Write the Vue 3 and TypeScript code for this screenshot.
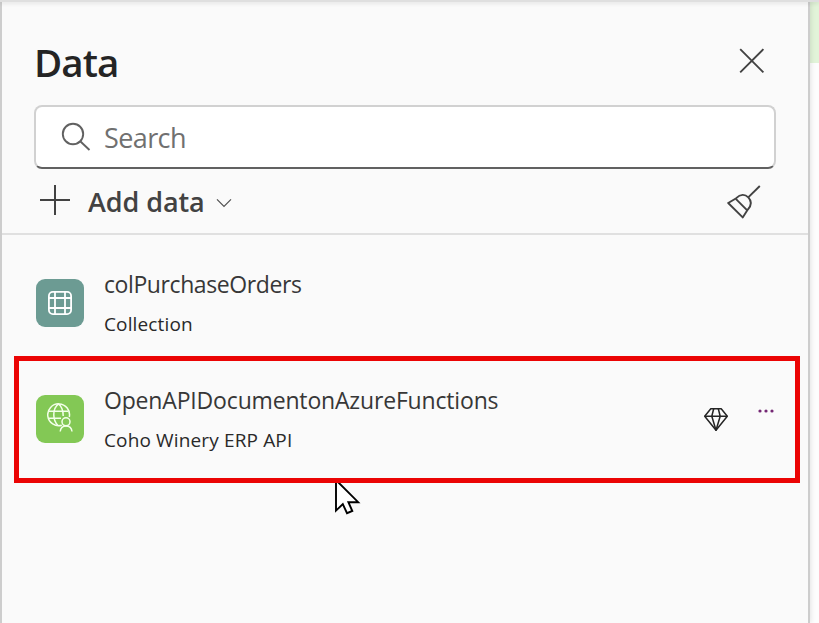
<script setup lang="ts">
interface Source {
  name: string
  detail: string
  kind: 'collection' | 'connector'
  premium: boolean
}

const sources: Source[] = [
  { name: 'colPurchaseOrders', detail: 'Collection', kind: 'collection', premium: false },
  { name: 'OpenAPIDocumentonAzureFunctions', detail: 'Coho Winery ERP API', kind: 'connector', premium: true },
]
</script>

<template>
  <div class="page">
    <section class="panel">
      <header class="head">
        <h1 class="title">Data</h1>
        <svg class="close" viewBox="0 0 26 26" width="26" height="26">
          <path d="M1.2 1.2 24.4 24.4M24.4 1.2 1.2 24.4" fill="none" stroke="#424242" stroke-width="1.9" />
        </svg>
      </header>

      <div class="search">
        <svg width="32" height="32" viewBox="0 0 32 32">
          <g fill="none" stroke="#616161" stroke-width="1.9">
            <circle cx="13" cy="13" r="10.2" />
            <path d="M20.5 20.5 29.5 29" />
          </g>
        </svg>
        <span class="placeholder">Search</span>
      </div>

      <div class="toolbar">
        <svg width="30" height="30" viewBox="0 0 30 30">
          <path d="M15 0V30M0 15H30" fill="none" stroke="#424242" stroke-width="2" />
        </svg>
        <span class="add">Add data</span>
        <svg class="chevron" width="16" height="10" viewBox="0 0 16 10">
          <path d="M1 1.3 8 8.3 15 1.3" fill="none" stroke="#505050" stroke-width="1.2" />
        </svg>
        <svg class="broom" width="34" height="34" viewBox="0 0 34 34">
          <g fill="none" stroke="#424242" stroke-width="1.9" stroke-linejoin="round">
            <path d="M32.8 1 21.5 12.2" />
            <path d="M1.2 18 9.2 13.2C13.5 8.8 18 9 21.3 12.3C24.8 16 24.8 20 20.8 24.6L15.7 32.4Z" />
            <path d="M8.8 13.8 20 25.2" />
          </g>
        </svg>
      </div>

      <ul class="list">
        <li v-for="source in sources" :key="source.name" class="row">
          <span class="tile" :class="source.kind">
            <svg v-if="source.kind === 'collection'" width="24" height="24" viewBox="0 0 24 24">
              <g fill="none" stroke="#fff" stroke-width="1.8">
                <rect x="0.9" y="0.9" width="22.2" height="22.2" rx="4" />
                <path d="M7 1V23M17 1V23M1 7H23M1 17H23" />
              </g>
            </svg>
            <svg v-else class="globe" width="26" height="29" viewBox="0 0 26 29">
              <g fill="none" stroke="#f3ffe9" stroke-width="1.5">
                <path d="M14.8 22.2A10.9 10.9 0 1 1 22.3 14" />
                <path d="M11 22.6C7.6 19 6.8 15.5 6.8 11.7S8 3.6 11.5 .9C15 3.6 16.2 8 16.2 13" />
                <path d="M2 8.2H21M2 15.2H14" />
                <circle cx="19" cy="18.8" r="4" />
                <path d="M13.2 28.5C13.6 24.8 16 22.9 19 22.9S24.6 24.8 25 28.5" />
              </g>
            </svg>
          </span>
          <div class="text">
            <span class="name" :class="source.kind">{{ source.name }}</span>
            <span class="detail">{{ source.detail }}</span>
          </div>
          <div v-if="source.premium" class="actions">
            <svg class="gem" width="26" height="26" viewBox="0 0 26 26">
              <g fill="none" stroke="#242424" stroke-width="1.5" stroke-linejoin="round">
                <path d="M7.8 1.7H18.2L24.3 9.3 13 23.2 1.7 9.3Z" />
                <path d="M1.7 9.3H24.3M10.7 1.7 8.8 9.3 13 23.2 17.2 9.3 15.3 1.7" />
              </g>
            </svg>
            <svg class="more" width="16" height="4" viewBox="0 0 16 4">
              <g fill="#742774">
                <circle cx="2" cy="2" r="1.6" />
                <circle cx="8" cy="2" r="1.6" />
                <circle cx="14" cy="2" r="1.6" />
              </g>
            </svg>
          </div>
        </li>
      </ul>
    </section>
    <aside class="canvas"><div class="banner"></div></aside>
    <svg class="cursor" width="26" height="34" viewBox="0 0 26 34">
      <path d="M1 0V28.6L7.8 22 12 31.2 17.3 29 13.4 20.2H23.2L3 0Z" fill="#fff" stroke="#000" stroke-width="1.9" />
    </svg>
    <div class="highlight"></div>
    <div class="topline"></div>
  </div>
</template>

<style>
body {
  margin: 0;
  overflow: hidden;
}
</style>

<style scoped>
.page {
  position: relative;
  display: flex;
  width: 819px;
  height: 623px;
  overflow: hidden;
  font-family: 'Open Sans', 'Noto Sans', sans-serif;
  background: #fafafa;
}
.panel {
  position: relative;
  z-index: 1;
  box-sizing: border-box;
  width: 810px;
  flex: none;
  border-left: 2px solid #cdcdcd;
  border-right: 2px solid #cdcdcd;
  background: #fafafa;
  box-shadow: 1px 0 5px rgba(0, 0, 0, 0.1);
}
.topline {
  position: absolute;
  top: 0;
  left: 0;
  z-index: 2;
  width: 100%;
  height: 2px;
  background: #dfdfdf;
  box-shadow: 0 1px 4px rgba(0, 0, 0, 0.16);
}
.canvas {
  flex: 1;
  background: #fdfdfd;
}
.banner {
  height: 63px;
  background: #e2f4d9;
}
.head {
  display: flex;
  align-items: flex-start;
  justify-content: space-between;
  height: 68px;
  padding: 38px 43px 0 32px;
}
.title {
  margin: 0;
  font-size: 38.5px;
  font-weight: 600;
  line-height: 48px;
  letter-spacing: -0.9px;
  color: #242424;
}
.close {
  margin-top: 10px;
}
.search {
  box-sizing: border-box;
  display: flex;
  align-items: center;
  height: 64px;
  margin: -1px 32px 0 32px;
  padding-left: 24px;
  border: 2px solid #d1d1d1;
  border-bottom-color: #616161;
  border-radius: 8px;
  background: #fff;
}
.placeholder {
  margin: 2px 0 0 12px;
  font-size: 27px;
  line-height: 36px;
  letter-spacing: -0.6px;
  color: #707070;
}
.toolbar {
  box-sizing: border-box;
  display: flex;
  align-items: center;
  height: 66px;
  padding: 0 47px 1px 38px;
  border-bottom: 2px solid #e0e0e0;
}
.toolbar > svg:first-child {
  margin-top: -2px;
}
.add {
  margin: 2px 0 0 18px;
  font-size: 27px;
  font-weight: 600;
  line-height: 36px;
  letter-spacing: -0.08px;
  color: #424242;
}
.chevron {
  margin: 5px 0 0 11px;
}
.broom {
  margin: 2px 0 0 auto;
}
.list {
  margin: 0;
  padding: 10px 0 0;
  list-style: none;
}
.row {
  display: flex;
  align-items: center;
  height: 116px;
  padding: 0 34px;
}
.tile {
  display: flex;
  align-items: center;
  justify-content: center;
  width: 48px;
  height: 48px;
  border-radius: 9px;
}
.tile.collection {
  background: #6c9b93;
}
.tile.connector {
  background: #83c855;
}
.globe {
  margin-top: -3px;
}
.text {
  display: flex;
  flex-direction: column;
  margin-left: 20px;
}
.name {
  margin: -2px 0 1px;
  font-size: 23px;
  line-height: 42px;
  color: #373737;
}
.name.collection {
  letter-spacing: -0.41px;
}
.name.connector {
  letter-spacing: -0.17px;
}
.detail {
  font-size: 19px;
  line-height: 36px;
  letter-spacing: 0.14px;
  color: #292929;
}
.actions {
  display: flex;
  align-items: center;
  gap: 29px;
  margin-left: auto;
}
.gem {
  margin-top: 2px;
}
.more {
  margin-top: -17px;
}
.highlight {
  position: absolute;
  top: 356px;
  left: 14px;
  z-index: 3;
  box-sizing: border-box;
  width: 786px;
  height: 127px;
  border: 5px solid #eb0404;
}
.cursor {
  position: absolute;
  top: 482px;
  left: 335px;
  z-index: 2;
}
</style>
